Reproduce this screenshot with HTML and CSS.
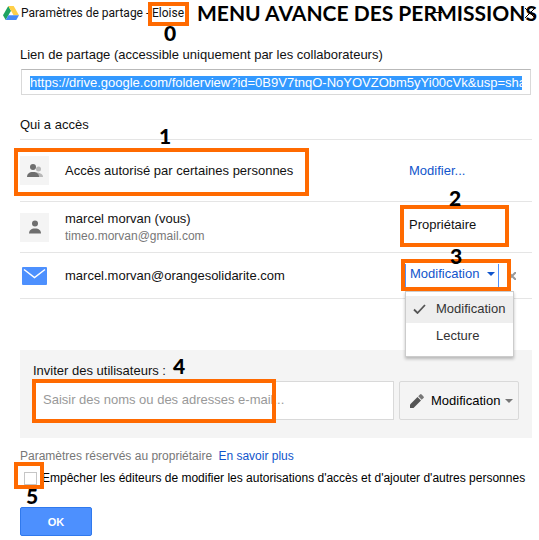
FILE: index.html
```
<!DOCTYPE html>
<html lang="fr">
<head>
    <meta charset="UTF-8">
    <title>Paramètres de partage - Eloise</title>
    <meta name="viewport" content="width=device-width, initial-scale=1.0">
    <link rel="stylesheet" href="styles.css">
</head>
<body>
<div class="window">
    <div class="titlebar">
        <svg class="logo" width="16" height="14" viewBox="0 0 16 14">
            <path fill="#1ea362" d="M5.3 0 0 9.3 2.7 14 8 4.700z"/>
            <path fill="#ffcf48" d="M5.300 0h5.400L16 9.300h-5.400z"/>
            <path fill="#4688f4" d="M2.700 14 5.400 9.300H16L13.300 14z"/>
        </svg>
        <p class="caption">Paramètres de partage -</p>
        <p class="folder">Eloise<span class="mark"></span><b class="num">0</b></p>
        <h1>MENU AVANCE DES PERMISSIONS</h1>
        <button type="button" class="win-btn minimize" aria-label="Réduire">
            <svg width="8" height="10" viewBox="0 0 8 10"><path d="M0 4.500h8" stroke="#000"/></svg>
        </button>
        <button type="button" class="win-btn close" aria-label="Fermer">
            <svg width="10" height="10" viewBox="0 0 10 10"><path d="M0 0l10 10M10 0L0 10" stroke="#000"/></svg>
        </button>
    </div>
    <form class="content">
        <label class="link-label" for="link">Lien de partage (accessible uniquement par les collaborateurs)</label>
        <div class="link-box">
            <input type="text" id="link" readonly value="https://drive.google.com/folderview?id=0B9V7tnqO-NoYOVZObm5yYi00cVk&amp;usp=sharing">
        </div>

        <h2>Qui a accès</h2>
        <ul class="access">
            <li class="visibility">
                <span class="avatar">
                    <svg width="16" height="14" viewBox="0 0 16 14">
                        <circle cx="11.500" cy="5" r="2.500" fill="#b8b8b8"/>
                        <path fill="#b8b8b8" d="M9 8.500c4 0 7 1.500 7 4.500H9z"/>
                        <circle cx="6" cy="3" r="3" fill="#6e6e6e"/>
                        <path fill="#6e6e6e" d="M0 13c0-3 2-5 6-5s6 2 6 5z"/>
                    </svg>
                </span>
                <p class="who">Accès autorisé par certaines personnes</p>
                <a class="role" href="#">Modifier...</a>
                <span class="mark"></span><b class="num">1</b>
            </li>
            <li class="owner">
                <span class="avatar">
                    <svg width="12" height="14" viewBox="0 0 12 14">
                        <circle cx="6" cy="3.500" r="3" fill="#6e6e6e"/>
                        <path fill="#6e6e6e" d="M0 13.500c0-3 2-5 6-5s6 2 6 5z"/>
                    </svg>
                </span>
                <div class="who">
                    <p>marcel morvan (vous)</p>
                    <p class="mail">timeo.morvan@gmail.com</p>
                </div>
                <p class="role">Propriétaire<span class="mark"></span><b class="num">2</b></p>
            </li>
            <li class="guest">
                <span class="avatar plain">
                    <svg width="25" height="18" viewBox="0 0 25 18">
                        <rect width="25" height="18" rx="1" fill="#4d90fe"/>
                        <path d="M2 2.500 12.500 10.500 23 2.500" fill="none" stroke="#fff" stroke-width="1.500"/>
                    </svg>
                </span>
                <p class="who">marcel.morvan@orangesolidarite.com</p>
                <div class="role">
                    <button type="button" class="role-btn" aria-haspopup="true" aria-expanded="true">Modification<i class="arrow"></i></button>
                    <button type="button" class="remove" aria-label="Supprimer">
                        <svg width="8" height="8" viewBox="0 0 8 8"><path d="M0 0l8 8M8 0L0 8" stroke="#999" stroke-width="2"/></svg>
                    </button>
                    <div class="menu" role="menu">
                        <button type="button" class="selected" role="menuitemradio" aria-checked="true">
                            <svg width="13" height="10" viewBox="0 0 13 10"><path d="M1 5.500 4.500 9 12 1" fill="none" stroke="#555" stroke-width="1.800"/></svg>
                            Modification
                        </button>
                        <button type="button" role="menuitemradio" aria-checked="false">Lecture</button>
                    </div>
                    <span class="mark"></span><b class="num">3</b>
                </div>
            </li>
        </ul>

        <div class="invite">
            <label for="users">Inviter des utilisateurs :<b class="num">4</b></label>
            <div class="invite-row">
                <div class="users">
                    <input type="text" id="users" placeholder="Saisir des noms ou des adresses e-mail...">
                    <span class="mark"></span>
                </div>
                <button type="button" class="invite-role">
                    <svg width="14" height="14" viewBox="0 0 14 14">
                        <path fill="#555" d="M0 10.500 7.500 3l3.500 3.500L3.500 14H0z"/>
                        <path fill="#777" d="M8.200 2.300 10 .5q.8-.8 1.600 0l1.900 1.900q.8.800 0 1.600L11.700 5.800z"/>
                    </svg>
                    Modification<i class="arrow"></i>
                </button>
            </div>
        </div>

        <p class="settings">Paramètres réservés au propriétaire <a href="#">En savoir plus</a></p>
        <div class="restrict">
            <input type="checkbox" id="restrict">
            <label for="restrict">Empêcher les éditeurs de modifier les autorisations d'accès et d'ajouter d'autres personnes</label>
            <span class="mark"></span><b class="num">5</b>
        </div>
        <button type="button" class="ok">OK</button>
    </form>
</div>
</body>
</html>
```
FILE: styles.css
```
*{margin: 0;padding: 0;box-sizing: border-box;}
body{
    background-color: #fff;
    color: #111;
    font: 13px/20px "Liberation Sans", Arial, sans-serif;
}
ul{list-style: none;}
a{color: #15c;text-decoration: none;}
button,input{font: inherit;color: inherit;}
button{border: 0;background: none;}
svg{display: block;flex: none;}

/* orange frames and their numbers */
.mark{
    position: absolute;
    border: 4px solid #ff6a00;
    pointer-events: none;
}
.num{
    position: absolute;
    color: #000;
    font: 900 21px/22px Lato, sans-serif;
}

.titlebar{
    position: relative;
    display: flex;
    align-items: center;
    height: 26px;
    padding-left: 3px;
    font: 12px/20px Roboto, sans-serif;
}
.caption{
    width: 127px;
    margin-left: 2px;
    white-space: nowrap;
}
.folder{
    position: relative;
    margin-left: 4px;
}
.folder .mark{
    top: -1px;
    left: -4px;
    width: 41px;
    height: 24px;
}
.folder .num{top: 19px;left: 12px;}
.titlebar h1{
    position: absolute;
    left: 197px;
    top: 0;
    color: #000;
    font: bold 21px/26px Lato, sans-serif;
    white-space: nowrap;
}
.win-btn{position: relative;}
.minimize{margin-left: auto;margin-right: 83px;}
.close{margin-right: 4px;}

.content{padding: 19px 7px 4px 20px;}
.link-label{display: block;}
.link-box{
    height: 26px;
    margin: 4px 1px 0;
    padding: 6px 8px;
    border: 1px solid #d9d9d9;
    border-top-color: #b9b9b9;
}
.link-box input{
    display: block;
    width: 100%;
    height: 14px;
    border: 0;
    outline: none;
    background-color: #39f;
    color: #fff;
}
h2{
    margin-top: 20px;
    font-size: 13px;
    font-weight: normal;
}

.access{
    margin-top: 4px;
    border-bottom: 1px solid #e5e5e5;
}
.access li{
    position: relative;
    display: flex;
    align-items: center;
    border-top: 1px solid #e5e5e5;
}
.access .visibility{height: 62px;}
.access .owner{height: 51px;}
.access .guest{height: 46px;}
.avatar{
    display: flex;
    flex: none;
    align-items: center;
    justify-content: center;
    width: 29px;
    height: 29px;
    margin-right: 16px;
    background-color: #f4f4f4;
}
.avatar.plain{background: none;}
.who{flex: 1;line-height: 18px;}
.who .mail{color: #777;font-size: 12px;line-height: 16px;}
.role{
    position: relative;
    flex: none;
    width: 123px;
}
.visibility .mark{
    top: 8px;
    left: -6px;
    width: 295px;
    height: 48px;
}
.visibility .num{top: -15px;left: 139px;}
.owner .role{padding-bottom: 4px;}
.owner .mark{
    top: -10px;
    left: -9px;
    width: 109px;
    height: 42px;
}
.owner .num{top: -28px;left: 40px;}
.guest .role{display: flex;align-items: center;}
.role-btn{
    display: flex;
    align-items: center;
    width: 94px;
    height: 24px;
    margin-left: -4px;
    padding: 0 0 4px 4px;
    border: solid #4d90fe;
    border-width: 0 1px;
    color: #15c;
}
.arrow{
    margin-left: 8px;
    border: 4px solid transparent;
    border-top-color: currentColor;
    border-bottom: 0;
}
.remove{margin-left: 9px;}
.guest .mark{
    top: -5px;
    left: -8px;
    width: 110px;
    height: 32px;
}
.guest .num{top: -19px;left: 41px;}
.menu{
    position: absolute;
    top: 27px;
    left: -4px;
    width: 109px;
    padding: 4px 0 6px;
    border: 1px solid #ccc;
    background-color: #fff;
    box-shadow: 0 2px 3px rgba(0,0,0,.25);
}
.menu button{
    display: flex;
    align-items: center;
    width: 100%;
    height: 27px;
    padding-left: 30px;
    color: #333;
}
.menu .selected{padding-left: 7px;background-color: #eee;}
.menu svg{margin-right: 10px;}

.invite{
    margin-top: 51px;
    padding: 11px 13px 18px;
    background-color: #f4f4f4;
}
.invite label{position: relative;display: inline-block;}
.invite .num{top: -6px;left: 140px;}
.invite-row{display: flex;}
.users{
    position: relative;
    flex: 1;
    margin-right: 5px;
}
.users input{
    width: 100%;
    height: 39px;
    padding: 0 9px 2px;
    border: 1px solid #d9d9d9;
}
.users input::placeholder{color: #999;opacity: 1;}
.users .mark{
    top: -2px;
    left: -1px;
    width: 244px;
    height: 44px;
}
.invite-role{
    display: flex;
    align-items: center;
    width: 120px;
    height: 39px;
    padding-left: 10px;
    border: 1px solid #d9d9d9;
    border-radius: 2px;
    color: #000;
}
.invite-role svg{margin-right: 7px;}
.invite-role .arrow{margin-left: 5px;border-top-color: #777;}

.settings{
    margin-top: 8px;
    color: #777;
    font-size: 12px;
}
.settings a{margin-left: 3px;}
.restrict{
    position: relative;
    display: flex;
    align-items: center;
    margin-top: 2px;
    padding-left: 4px;
    color: #000;
    font-size: 12px;
}
.restrict input{
    flex: none;
    width: 13px;
    height: 13px;
    margin-right: 5px;
    border: 1px solid #c6c6c6;
    background-color: #fff;
    appearance: none;
}
.restrict .mark{
    top: -6px;
    left: -6px;
    width: 30px;
    height: 27px;
}
.restrict .num{top: 17px;left: 6px;}
.ok{
    width: 72px;
    height: 29px;
    margin-top: 19px;
    border: 1px solid #3079ed;
    border-radius: 2px;
    background-color: #4d90fe;
    color: #fff;
    font-size: 11px;
    font-weight: bold;
}
```
